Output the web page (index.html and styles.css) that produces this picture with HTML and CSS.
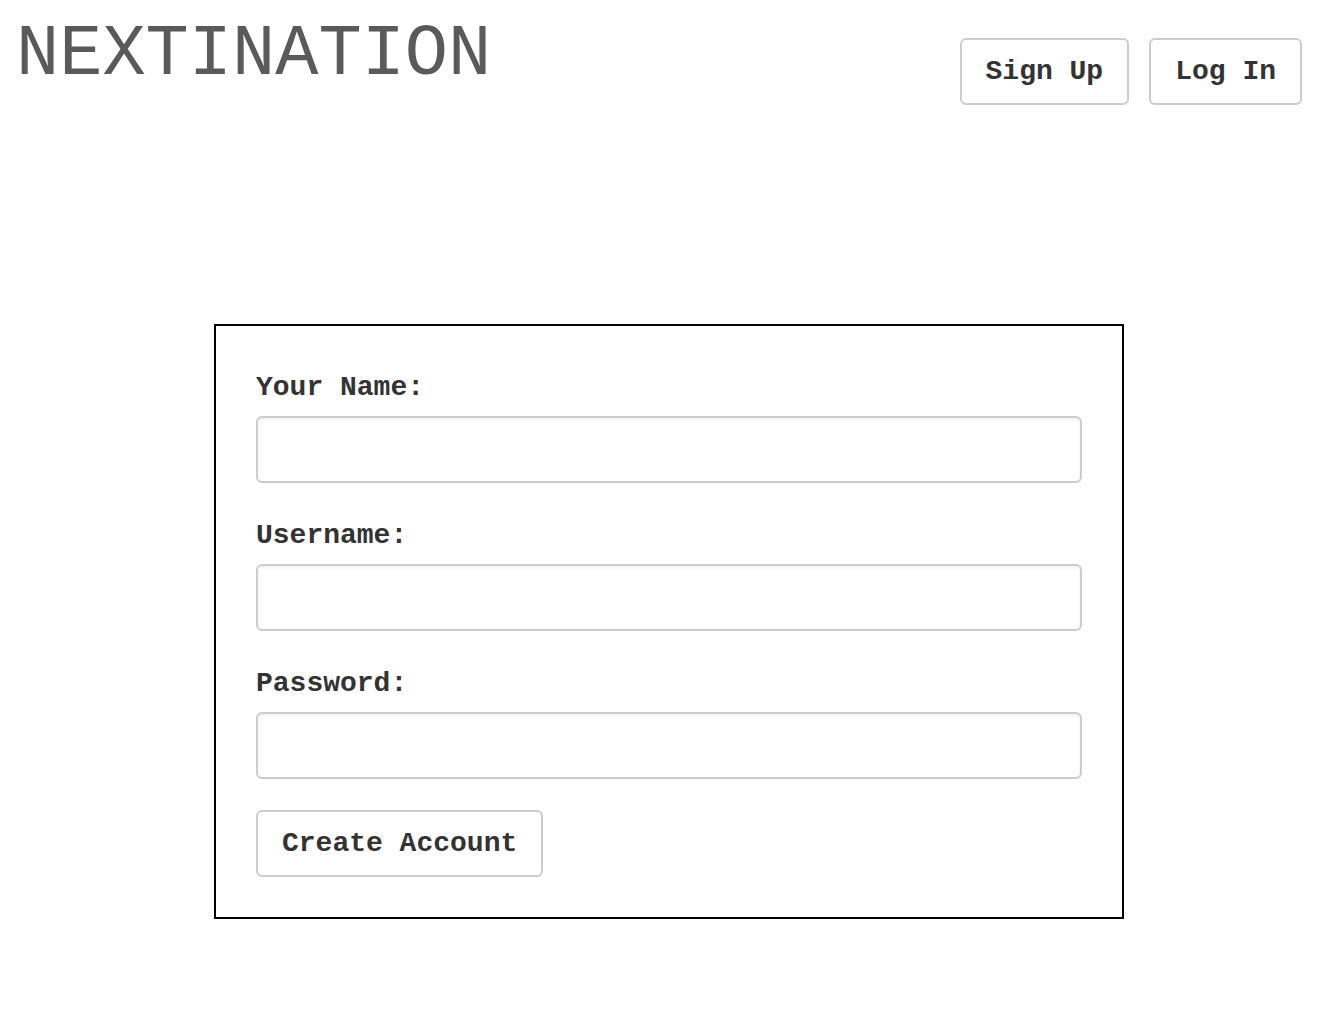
FILE: index.html
```html
<!DOCTYPE html>
<html>
<head>
<meta charset="utf-8">
<link rel="stylesheet" href="styles.css">
</head>
<body>
<header class="topbar">
  <div class="logo">NEXTINATION</div>
  <nav class="nav">
    <button class="btn">Sign Up</button>
    <button class="btn">Log In</button>
  </nav>
</header>
<main class="content">
  <form class="signup">
    <label class="field-label">Your Name:</label>
    <input class="field" type="text">
    <label class="field-label">Username:</label>
    <input class="field" type="text">
    <label class="field-label">Password:</label>
    <input class="field" type="password">
    <div class="actions">
      <button class="btn" type="button">Create Account</button>
    </div>
  </form>
</main>
</body>
</html>
```
FILE: styles.css
```css
html, body {
  margin: 0;
  padding: 0;
  background: #fff;
}
body {
  font-family: "Liberation Mono", "Courier New", monospace;
  color: #333;
}
.topbar {
  display: flex;
  justify-content: space-between;
  align-items: flex-start;
  padding: 0 34px 0 16px;
}
.logo {
  font-size: 72px;
  line-height: 72px;
  padding-top: 19px;
  color: #5a5a5a;
  font-weight: normal;
}
.nav {
  display: flex;
  gap: 20px;
  margin-top: 38px;
}
.btn {
  font-family: "Liberation Mono", "Courier New", monospace;
  font-size: 28px;
  font-weight: bold;
  color: #333;
  background: #fff;
  border: 2px solid #ccc;
  border-radius: 6px;
  height: 67px;
  padding: 0 24px;
  line-height: 1;
  cursor: pointer;
}
.content {
  padding-left: 2px;
}
.signup {
  box-sizing: border-box;
  width: 910px;
  margin: 219px auto 0;
  border: 2px solid #000;
  padding: 40px;
  display: flex;
  flex-direction: column;
}
.field-label {
  font-size: 28px;
  font-weight: bold;
  line-height: 43px;
  margin-bottom: 7px;
  color: #333;
}
.field {
  box-sizing: border-box;
  height: 67px;
  width: 100%;
  border: 2px solid #ccc;
  border-radius: 6px;
  box-shadow: inset 0 2px 3px rgba(0, 0, 0, 0.06);
  margin: 0 0 31px;
  padding: 0 16px;
  font-family: "Liberation Mono", "Courier New", monospace;
  font-size: 24px;
  outline: none;
}
.actions {
  display: flex;
}
```
